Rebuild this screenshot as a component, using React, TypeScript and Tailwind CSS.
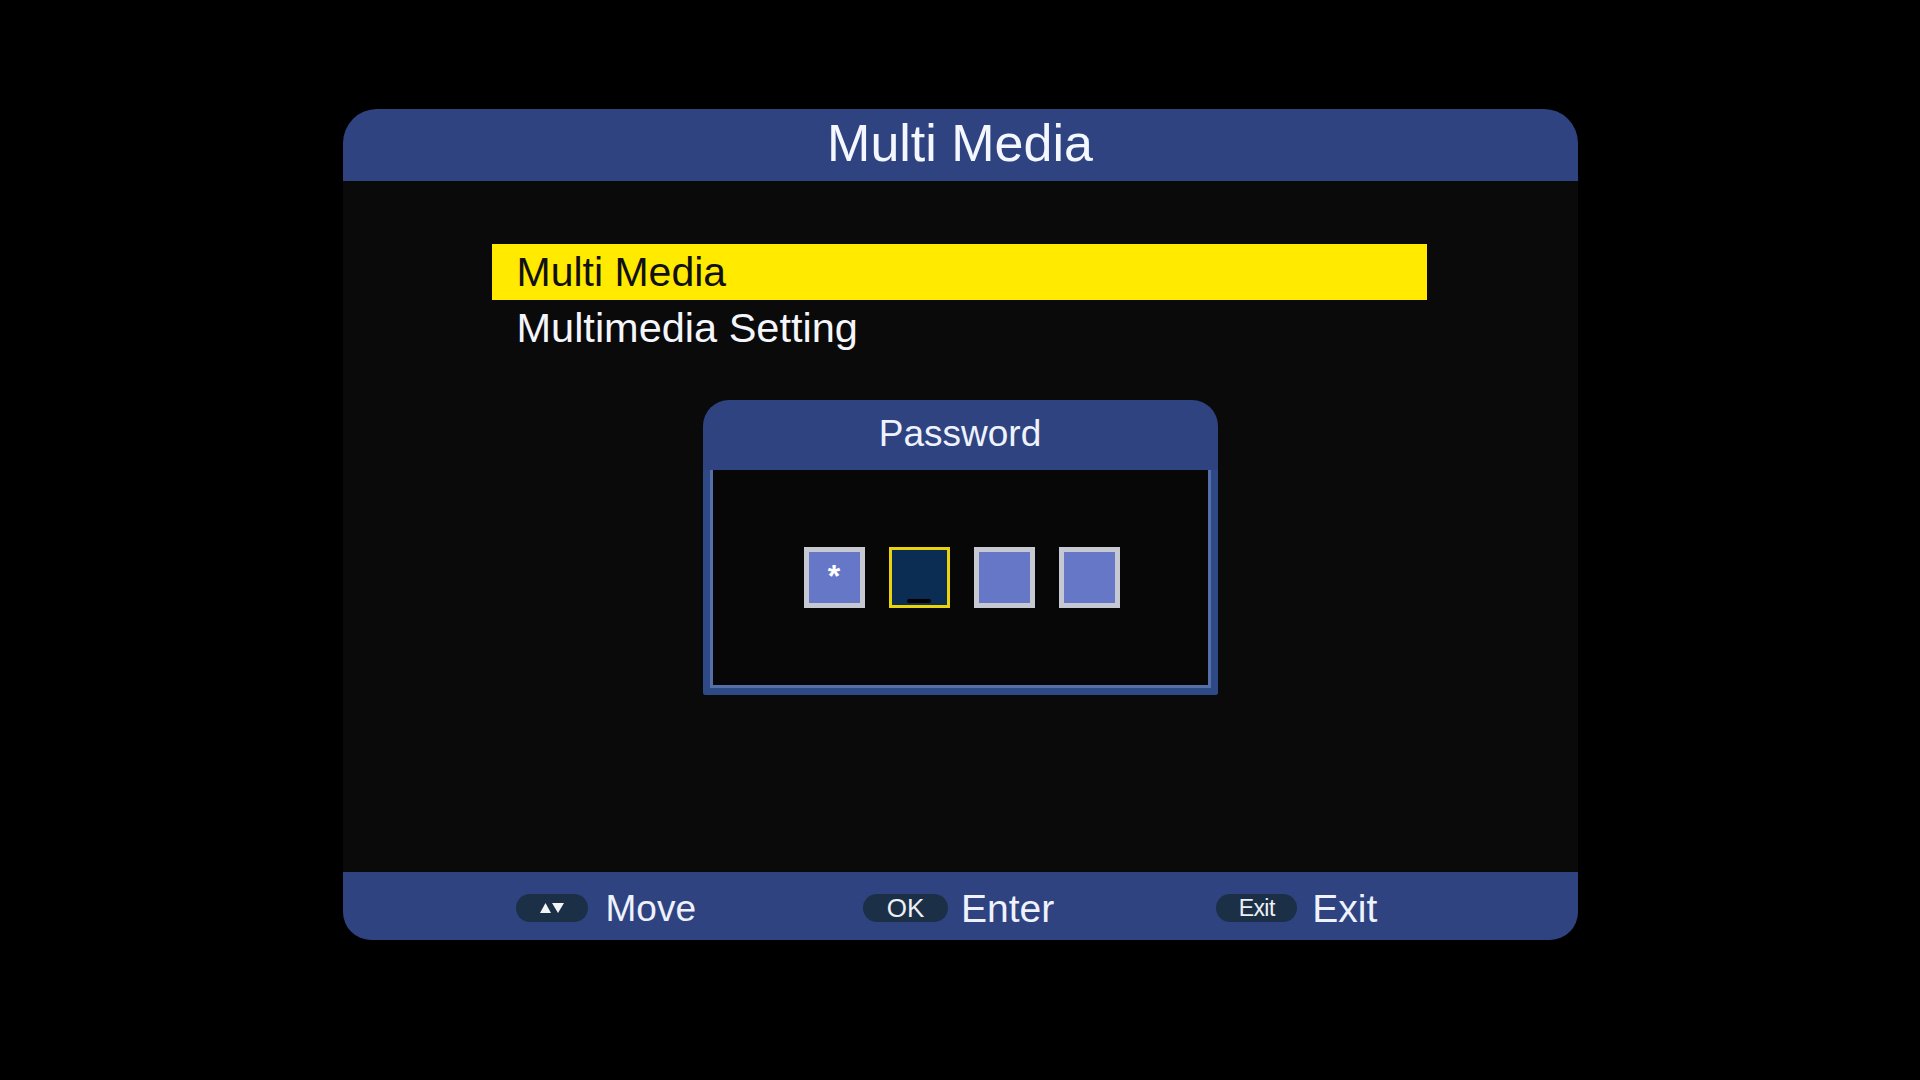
export default function App() {
  return (
    <div className="w-full h-[1080px] bg-black pt-[109px] font-['Liberation_Sans',Arial,sans-serif]">
      <div className="mx-auto w-[1235px] h-[831px] flex flex-col bg-[#0a0a0a] rounded-t-[34px] rounded-b-[28px]">
        {/* Header */}
        <div className="h-[72px] shrink-0 rounded-t-[34px] bg-[#2e4380] flex items-center justify-center pb-[4px]">
          <span className="text-[52px] leading-none text-[#f4f7ff]">Multi Media</span>
        </div>

        {/* Body */}
        <div className="flex-1 flex flex-col pt-[63px]">
          <div className="ml-[149px] w-[935px] flex flex-col">
            <div className="h-[56px] bg-[#ffea00] flex items-center pl-[25px] text-[41px] leading-none text-[#111]">
              Multi Media
            </div>
            <div className="h-[56px] flex items-center pl-[25px] text-[41.5px] leading-none text-[#f4f6fb]">
              Multimedia Setting
            </div>
          </div>

          {/* Password dialog */}
          <div className="mt-[44px] mx-auto w-[515px] flex flex-col">
            <div className="h-[70px] rounded-t-[26px] bg-[#2e4380] flex items-center justify-center pb-[4px]">
              <span className="text-[37px] leading-none text-[#eef2fc]">Password</span>
            </div>
            <div className="h-[225px] border-x-[7px] border-b-[7px] border-[#2f4886] rounded-b-[3px] flex">
              <div className="flex-1 border-x-[3px] border-b-[3px] border-[#5570a8] bg-[#070707] flex items-center justify-center gap-[24px] pl-[3px]">
                <div className="w-[61px] h-[61px] border-[5px] border-[#c6c9d2] bg-[#6677c8] flex items-start justify-center pt-[8px]">
                  <span className="text-[32px] font-bold leading-none text-white">*</span>
                </div>
                <div className="w-[61px] h-[61px] border-[3px] border-[#e8d30c] bg-[#0b2c53] flex items-end justify-center pb-[2px]">
                  <div className="w-[24px] h-[4px] rounded-full bg-black" />
                </div>
                <div className="w-[61px] h-[61px] border-[5px] border-[#c6c9d2] bg-[#6677c8]" />
                <div className="w-[61px] h-[61px] border-[5px] border-[#c6c9d2] bg-[#6677c8]" />
              </div>
            </div>
          </div>
        </div>

        {/* Footer */}
        <div className="h-[68px] shrink-0 rounded-b-[28px] bg-[#2e4380] flex items-center pl-[173px] pt-[4px]">
          <div className="flex items-center gap-[18px]">
            <div className="w-[72px] h-[28px] rounded-full bg-[#1b2f47] flex items-center justify-center">
              <svg width="24" height="11" viewBox="0 0 24 11">
                <polygon points="0,10 5.5,0 11,10" fill="#f2f4f8" />
                <polygon points="12,0 24,0 18,10" fill="#f2f4f8" />
              </svg>
            </div>
            <span className="text-[37px] leading-none text-[#eef2fc]">Move</span>
          </div>
          <div className="flex items-center gap-[13px] ml-[167px]">
            <div className="w-[85px] h-[28px] rounded-full bg-[#1b2f47] flex items-center justify-center">
              <span className="text-[26px] leading-none text-[#eef0f4]">OK</span>
            </div>
            <span className="text-[39px] leading-none text-[#eef2fc]">Enter</span>
          </div>
          <div className="flex items-center gap-[15px] ml-[162px]">
            <div className="w-[81px] h-[28px] rounded-full bg-[#1b2f47] flex items-center justify-center">
              <span className="text-[23px] leading-none tracking-tight text-[#eef0f4]">Exit</span>
            </div>
            <span className="text-[39px] leading-none text-[#eef2fc]">Exit</span>
          </div>
        </div>
      </div>
    </div>
  );
}
